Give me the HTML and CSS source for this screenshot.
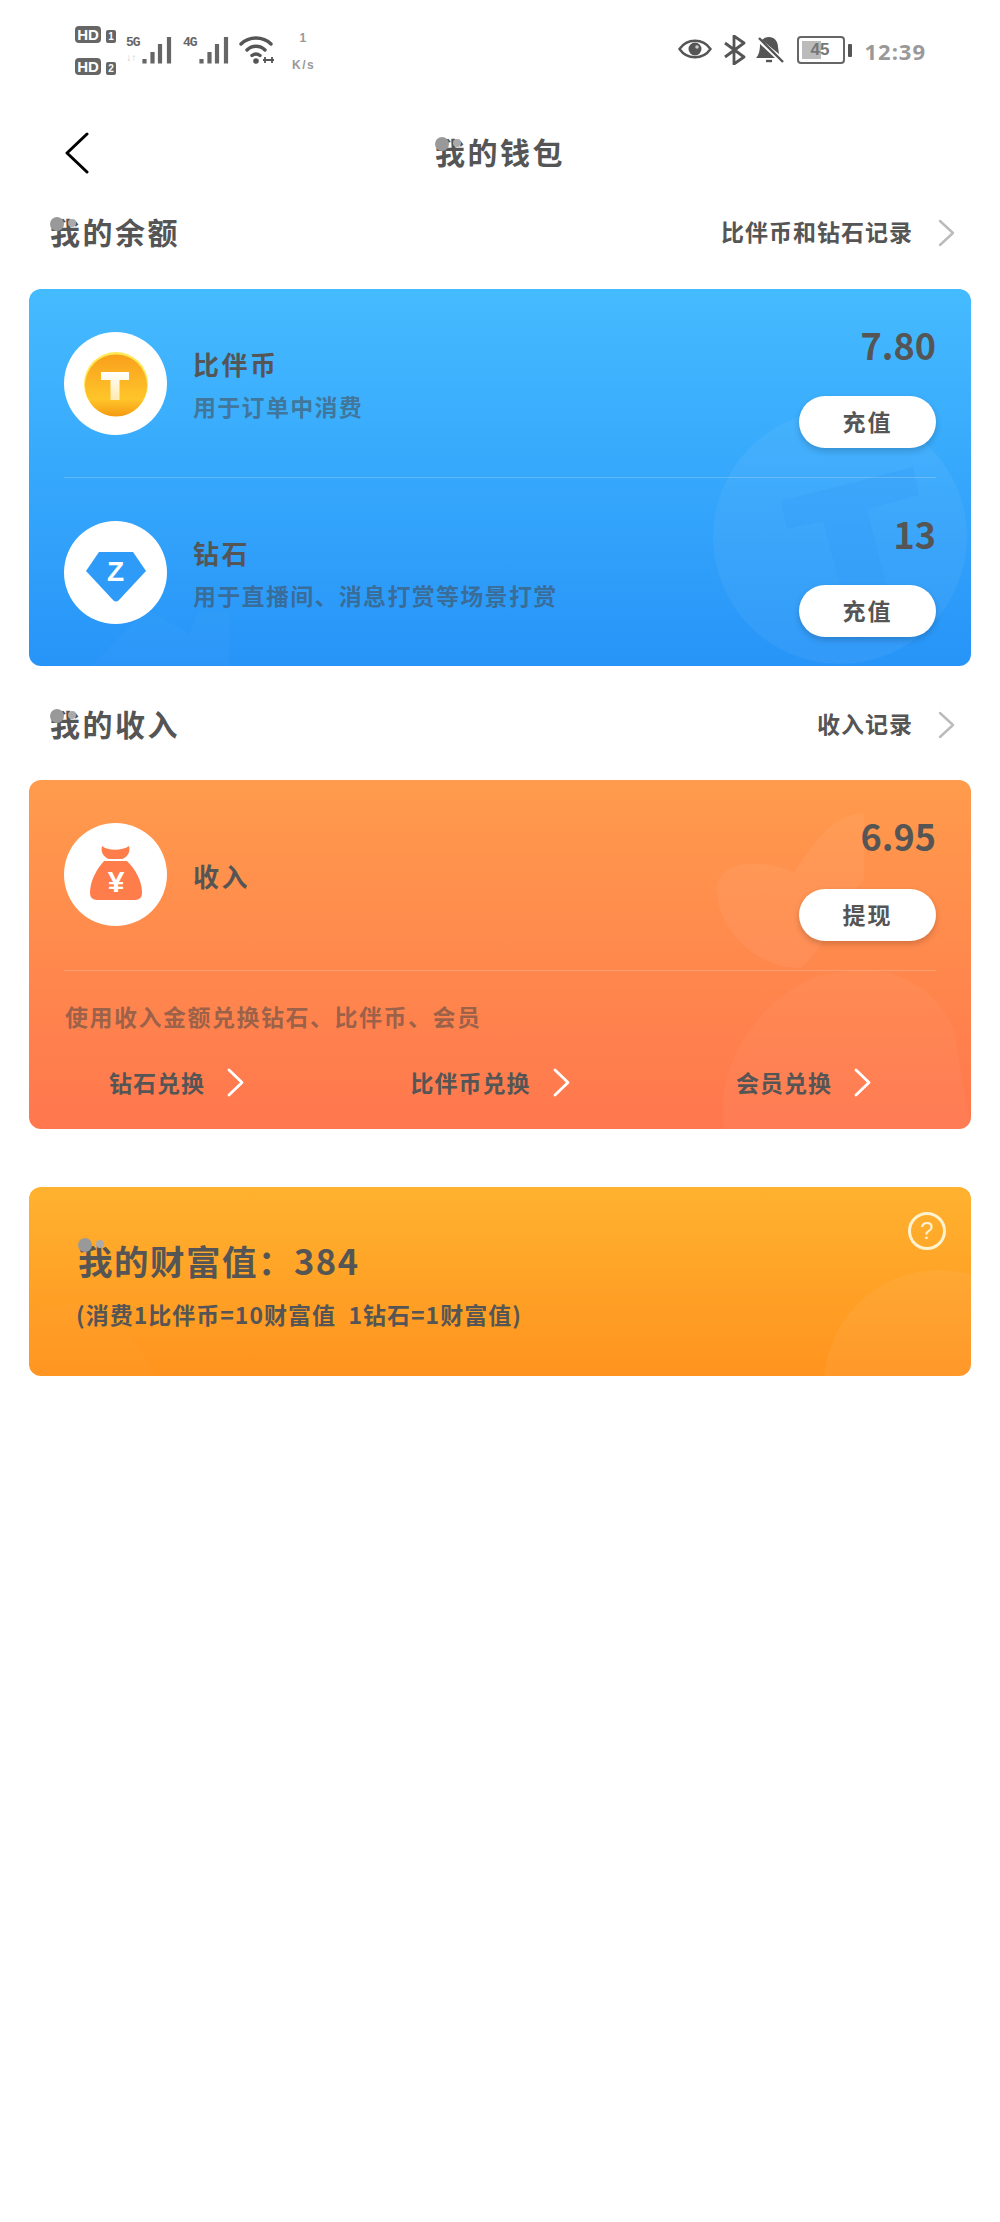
FILE: index.html
```html
<!DOCTYPE html>
<html lang="zh-CN">

<head>
    <meta charset="UTF-8">
    <meta name="viewport" content="width=device-width, initial-scale=1.0">
    <title>我的钱包</title>
    <link rel="stylesheet" href="styles.css">
</head>

<body>
    <!-- 状态栏 -->
    <div class="status_bar">
        <div class="status_left">
            <div class="hd_group">
                <div class="hd_row"><span class="hd_box">HD</span><span class="hd_num">1</span></div>
                <div class="hd_row"><span class="hd_box">HD</span><span class="hd_num">2</span></div>
            </div>
            <div class="signal signal_first">
                <div class="signal_label"><span>5G</span><span class="signal_arrow">↓↑</span></div>
                <svg width="31" height="28" viewBox="0 0 31 28"><path d="M2.500 23v4.500M10.500 16v11.500M18 8v19.500M27 1v26.500" stroke="#666" stroke-width="4.200" fill="none"/></svg>
            </div>
            <div class="signal signal_second">
                <div class="signal_label"><span>4G</span></div>
                <svg width="31" height="28" viewBox="0 0 31 28"><path d="M2.500 23v4.500M10.500 16v11.500M18 8v19.500M27 1v26.500" stroke="#666" stroke-width="4.200" fill="none"/></svg>
            </div>
            <svg class="wifi" width="36" height="30" viewBox="0 0 36 30">
                <path d="M2 9C10 1 24 1 32 9M8 15C13 10 21 10 26 15M13 20.500C15.500 18.500 18.500 18.500 21 20.500" stroke="#555" stroke-width="3.400" fill="none" stroke-linecap="round"/>
                <circle cx="17" cy="26" r="2.800" fill="#555"/>
                <path d="M26 22v6M33 22v6M24 25h11" stroke="#555" stroke-width="1.800" fill="none"/>
            </svg>
            <div class="speed"><span>1</span><span>K/s</span></div>
        </div>
        <div class="status_right">
            <svg width="34" height="26" viewBox="0 0 34 26">
                <path d="M1.500 13C9 2 25 2 32.500 13C25 24 9 24 1.500 13Z" stroke="#555" stroke-width="2.400" fill="none"/>
                <circle cx="17" cy="13" r="6.500" fill="#555"/>
                <circle cx="19" cy="11" r="1.800" fill="#ccc"/>
            </svg>
            <svg class="icon_bt" width="24" height="30" viewBox="0 0 24 30">
                <path d="M2 8L21 22L11 29V1L21 8L2 22" stroke="#555" stroke-width="2.800" fill="none" stroke-linejoin="round"/>
            </svg>
            <svg class="icon_bell" width="28" height="28" viewBox="0 0 28 28">
                <path d="M13 1C18 1 22 5 22 11L23 18L6 4C8 2 10 1 13 1ZM4 8L19 22H0C3 19 4 14 4 8Z" fill="#555"/>
                <path d="M10 25h6" stroke="#555" stroke-width="2.400"/>
                <path d="M3 2L27 26" stroke="#555" stroke-width="2.400"/>
            </svg>
            <div class="battery">
                <div class="battery_body"><div class="battery_level" style="width: 48%"></div><span>45</span></div>
                <div class="battery_tip"></div>
            </div>
            <div class="time">12:39</div>
        </div>
    </div>

    <div class="page">
        <div class="nav">
            <svg class="back" width="26" height="42" viewBox="0 0 26 42"><path d="M23 2L3 21L23 40" stroke="#000" stroke-width="3" fill="none" stroke-linecap="round" stroke-linejoin="round"/></svg>
            <div class="nav_title"><span class="wo">我</span>的钱包</div>
        </div>

        <!-- 我的余额 -->
        <div class="section_head">
            <div class="section_title"><span class="wo">我</span>的余额</div>
            <div class="section_link"><span>比伴币和钻石记录</span>
                <svg width="17" height="28" viewBox="0 0 17 28"><path d="M2 2L15 14L2 26" stroke="#bbb" stroke-width="2.400" fill="none" stroke-linecap="round" stroke-linejoin="round"/></svg>
            </div>
        </div>
        <div class="card card_blue">
            <svg class="card_bg" viewBox="0 0 942 377">
                <circle cx="811" cy="248" r="127" fill="#fff" fill-opacity=".05"/>
                <path d="M752 212L884 178L890 206L838 220L868 340L826 352L794 232L758 240Z" fill="#2f98f5" fill-opacity=".22"/>
                <path d="M62 377L118 320L160 345L170 322L200 322V377Z" fill="#fff" fill-opacity=".02"/>
            </svg>
            <div class="row">
                <div class="avatar">
                    <svg width="103" height="103" viewBox="0 0 103 103">
                        <defs>
                            <linearGradient id="coin" x1="0" y1="0" x2="0" y2="1">
                                <stop offset="0" stop-color="#f9a01c"/>
                                <stop offset=".72" stop-color="#ffc52a"/>
                                <stop offset="1" stop-color="#f59a10"/>
                            </linearGradient>
                            <linearGradient id="coinT" x1="0" y1="0" x2="0" y2="1">
                                <stop offset="0" stop-color="#fff"/>
                                <stop offset="1" stop-color="#ffeab0"/>
                            </linearGradient>
                        </defs>
                        <circle cx="52" cy="52" r="32" fill="#ffe957"/>
                        <circle cx="52" cy="53.500" r="31" fill="url(#coin)"/>
                        <path d="M37 40H65V48H55.500V68H46.500V48H37Z" fill="url(#coinT)"/>
                    </svg>
                </div>
                <div class="info">
                    <div class="info_name">比伴币</div>
                    <div class="info_desc">用于订单中消费</div>
                </div>
                <div class="side">
                    <div class="amount">7.80</div>
                    <div class="btn">充值</div>
                </div>
            </div>
            <div class="line"></div>
            <div class="row">
                <div class="avatar">
                    <svg width="103" height="103" viewBox="0 0 103 103">
                        <path d="M35 31H69L82 50L55 79Q52 82 49 79L22 50Z" fill="#2f9bf8"/>
                        <text x="51.500" y="60" class="avatar_text" font-size="28">Z</text>
                    </svg>
                </div>
                <div class="info">
                    <div class="info_name">钻石</div>
                    <div class="info_desc">用于直播间、消息打赏等场景打赏</div>
                </div>
                <div class="side">
                    <div class="amount">13</div>
                    <div class="btn">充值</div>
                </div>
            </div>
        </div>

        <!-- 我的收入 -->
        <div class="section_head section_income">
            <div class="section_title"><span class="wo">我</span>的收入</div>
            <div class="section_link"><span>收入记录</span>
                <svg width="17" height="28" viewBox="0 0 17 28"><path d="M2 2L15 14L2 26" stroke="#bbb" stroke-width="2.400" fill="none" stroke-linecap="round" stroke-linejoin="round"/></svg>
            </div>
        </div>
        <div class="card card_orange">
            <svg class="card_bg" viewBox="0 0 942 349">
                <path d="M688 110C688 80 730 78 765 92C785 65 800 35 835 33V100C810 125 795 170 772 188C730 190 688 150 688 110Z" fill="#fff" fill-opacity=".05"/>
                <path d="M695 349C685 280 735 215 790 196C850 180 900 195 925 250L942 349Z" fill="#fff" fill-opacity=".035"/>
            </svg>
            <div class="row">
                <div class="avatar">
                    <svg width="103" height="103" viewBox="0 0 103 103">
                        <path d="M38 23C44 28 58 28 65 23C67 30 62 35 58 36H45C41 35 36 30 38 23Z" fill="#ff7d4b"/>
                        <path d="M40 38H63C72 47 78 58 78 70Q78 77 71 77H33Q26 77 26 70C26 58 32 47 40 38Z" fill="#ff7d4b"/>
                        <text x="52" y="69" class="avatar_text" font-size="30">¥</text>
                    </svg>
                </div>
                <div class="info info_income">
                    <div class="info_name">收入</div>
                </div>
                <div class="side">
                    <div class="amount amount_income">6.95</div>
                    <div class="btn">提现</div>
                </div>
            </div>
            <div class="line"></div>
            <div class="note">使用收入金额兑换钻石、比伴币、会员</div>
            <div class="exchange">
                <div class="exchange_item">钻石兑换
                    <svg width="17" height="29" viewBox="0 0 17 29"><path d="M2 2L15 14.500L2 27" stroke="#fff" stroke-width="2.800" fill="none" stroke-linecap="round" stroke-linejoin="round"/></svg>
                </div>
                <div class="exchange_item">比伴币兑换
                    <svg width="17" height="29" viewBox="0 0 17 29"><path d="M2 2L15 14.500L2 27" stroke="#fff" stroke-width="2.800" fill="none" stroke-linecap="round" stroke-linejoin="round"/></svg>
                </div>
                <div class="exchange_item">会员兑换
                    <svg width="17" height="29" viewBox="0 0 17 29"><path d="M2 2L15 14.500L2 27" stroke="#fff" stroke-width="2.800" fill="none" stroke-linecap="round" stroke-linejoin="round"/></svg>
                </div>
            </div>
        </div>

        <!-- 我的财富值 -->
        <div class="card card_gold">
            <svg class="card_bg" viewBox="0 0 942 189">
                <circle cx="910" cy="198" r="115" fill="#fff" fill-opacity=".05"/>
                <path d="M0 130C40 105 90 110 125 189H0Z" fill="#fff" fill-opacity=".02"/>
            </svg>
            <div class="help">?</div>
            <div class="wealth"><span class="wo">我</span>的财富值：384</div>
            <div class="wealth_desc">(消费1比伴币=10财富值&nbsp;&nbsp;1钻石=1财富值)</div>
        </div>
    </div>
</body>

</html>
```

FILE: styles.css
```css
* {
    margin: 0;
    padding: 0;
    box-sizing: border-box;
}

body {
    background-color: #fff;
    color: #555;
    font-family: "Noto Sans CJK SC", "Liberation Sans", sans-serif;
    font-weight: 700;
}

svg {
    display: block;
    flex: none;
}

/* 状态栏 */
.status_bar {
    display: flex;
    justify-content: space-between;
    height: 90px;
    padding: 26px 74px 0 75px;
}

.status_left {
    display: flex;
    align-items: flex-start;
}

.hd_group {
    display: flex;
    flex-direction: column;
    gap: 15px;
    width: 51px;
}

.hd_row {
    display: flex;
    align-items: center;
    gap: 5px;
}

.hd_box {
    width: 26px;
    height: 17px;
    border-radius: 4px;
    background-color: #666;
    color: #fff;
    font-family: "Liberation Sans", sans-serif;
    font-size: 15px;
    line-height: 17px;
    text-align: center;
}

.hd_num {
    width: 10px;
    height: 13px;
    margin-top: 3px;
    border-radius: 2px;
    background-color: #666;
    color: #fff;
    font-family: "Liberation Sans", sans-serif;
    font-size: 10px;
    line-height: 13px;
    text-align: center;
}

.signal {
    display: flex;
    margin-top: 10px;
}

.signal_second {
    margin-left: 10px;
}

.signal_label {
    display: flex;
    flex-direction: column;
    justify-content: space-between;
    width: 16px;
    height: 28px;
    font-family: "Liberation Mono", monospace;
    font-size: 13px;
    line-height: 13px;
    letter-spacing: -1px;
    color: #666;
}

.signal_arrow {
    color: #ccc;
    font-size: 10px;
    line-height: 10px;
}

.wifi {
    margin: 9px 0 0 9px;
}

.speed {
    display: flex;
    flex-direction: column;
    align-items: center;
    gap: 13px;
    margin: 5px 0 0 17px;
    font-family: "Liberation Sans", sans-serif;
    font-size: 12px;
    line-height: 14px;
    letter-spacing: 1.500px;
    color: #999;
}

.status_right {
    display: flex;
    align-items: flex-start;
    padding-top: 10px;
}

.icon_bt {
    margin: -1px 0 0 11px;
}

.icon_bell {
    margin: 0 0 0 9px;
}

.battery {
    display: flex;
    align-items: center;
    gap: 3px;
    margin-left: 13px;
}

.battery_body {
    position: relative;
    width: 48px;
    height: 28px;
    padding: 3px;
    border: 2px solid #666;
    border-radius: 4px;
}

.battery_level {
    height: 100%;
    background-color: #bbb;
}

.battery_body span {
    position: absolute;
    left: 11px;
    top: 2px;
    color: #777;
    font-family: "Liberation Sans", sans-serif;
    font-size: 17px;
    font-weight: 700;
    line-height: 20px;
}

.battery_tip {
    width: 4px;
    height: 13px;
    border-radius: 1px;
    background-color: #555;
}

.time {
    margin: 0 0 0 12px;
    color: #999;
    font-family: "Noto Sans", sans-serif;
    font-size: 22px;
    font-weight: 700;
    line-height: 30px;
    letter-spacing: 1px;
}

/* 内容区 */
.page {
    padding: 0 29px;
}

.nav {
    display: grid;
    grid-template-columns: 1fr auto 1fr;
    align-items: center;
    height: 126px;
}

.back {
    margin-left: 35px;
}

.nav_title,
.section_title {
    margin-bottom: 5px;
    font-size: 30px;
    line-height: 34px;
    letter-spacing: 2.500px;
}

.wo {
    position: relative;
    display: inline-block;
}

/* 我字左上角的小花 */
.wo::before {
    content: "";
    position: absolute;
    left: 0;
    top: 3px;
    width: 14px;
    height: 14px;
    border-radius: 50%;
    background-color: #999;
    box-shadow: 15px -1px 0 -3px #aaa;
}

.section_head {
    display: flex;
    justify-content: space-between;
    align-items: center;
    height: 34px;
    margin-bottom: 39px;
    padding: 0 16px 0 21px;
}

.section_income {
    margin-top: 42px;
    margin-bottom: 38px;
}

.section_link {
    display: flex;
    align-items: center;
    gap: 25px;
    font-size: 23px;
    letter-spacing: 1px;
}

.section_link span {
    margin-bottom: 4px;
}

.card {
    position: relative;
    overflow: hidden;
    border-radius: 12px;
}

.card_bg {
    position: absolute;
    left: 0;
    top: 0;
    width: 100%;
    height: 100%;
}

.card_blue {
    height: 377px;
    background: linear-gradient(#45bbff, #2794f8);
}

.card_orange {
    height: 349px;
    background: linear-gradient(#ff9b4c, #ff774e);
}

.card_gold {
    height: 189px;
    margin-top: 58px;
    padding: 48px 0 0 47px;
    background: linear-gradient(#ffb22f, #ff931e);
}

.row {
    position: relative;
    display: flex;
    align-items: flex-start;
    padding: 43px 35px 29px;
}

.avatar {
    flex: none;
    width: 103px;
    height: 103px;
    border-radius: 50%;
    background-color: #fff;
}

.avatar_text {
    fill: #fff;
    font-family: "Liberation Sans", sans-serif;
    font-weight: 700;
    text-anchor: middle;
}

.info {
    flex: 1;
    margin: 15px 0 0 26px;
}

.info_income {
    margin-top: 36px;
}

.info_name {
    font-size: 26px;
    line-height: 34px;
    letter-spacing: 2.500px;
}

.info_desc {
    margin-top: 8px;
    font-size: 23px;
    line-height: 34px;
    letter-spacing: 1.300px;
    color: rgba(70, 70, 70, .55);
}

.side {
    display: flex;
    flex-direction: column;
    align-items: flex-end;
}

.amount {
    margin: -3px 0 37px;
    font-size: 36px;
    line-height: 30px;
}

.amount_income {
    margin-bottom: 39px;
}

.btn {
    width: 137px;
    height: 52px;
    border-radius: 26px;
    background-color: #fff;
    box-shadow: 0 3px 6px rgba(0, 0, 0, .18);
    font-size: 23px;
    line-height: 50px;
    letter-spacing: 2px;
    text-align: center;
}

.line {
    position: relative;
    height: 1px;
    margin: 0 35px;
    background-color: rgba(255, 255, 255, .2);
}

.note {
    position: relative;
    margin: 28px 0 0 36px;
    font-size: 23px;
    line-height: 34px;
    letter-spacing: 1.500px;
    color: rgba(70, 70, 70, .55);
}

.exchange {
    position: relative;
    display: flex;
    justify-content: space-between;
    margin-top: 32px;
    padding: 0 100px 0 80px;
}

.exchange_item {
    display: flex;
    align-items: center;
    gap: 22px;
    font-size: 23px;
    line-height: 34px;
    letter-spacing: 1px;
}

.help {
    position: absolute;
    right: 25px;
    top: 25px;
    width: 38px;
    height: 38px;
    border: 3px solid #fff2cf;
    border-radius: 50%;
    color: #fff2cf;
    font-family: "Liberation Sans", sans-serif;
    font-size: 24px;
    font-weight: 400;
    line-height: 32px;
    text-align: center;
}

.wealth {
    position: relative;
    margin-left: 2px;
    font-size: 34.500px;
    line-height: 50px;
    letter-spacing: 1.500px;
}

.wealth_desc {
    position: relative;
    margin-top: 12px;
    font-size: 23px;
    line-height: 34px;
    letter-spacing: 1px;
}
```
